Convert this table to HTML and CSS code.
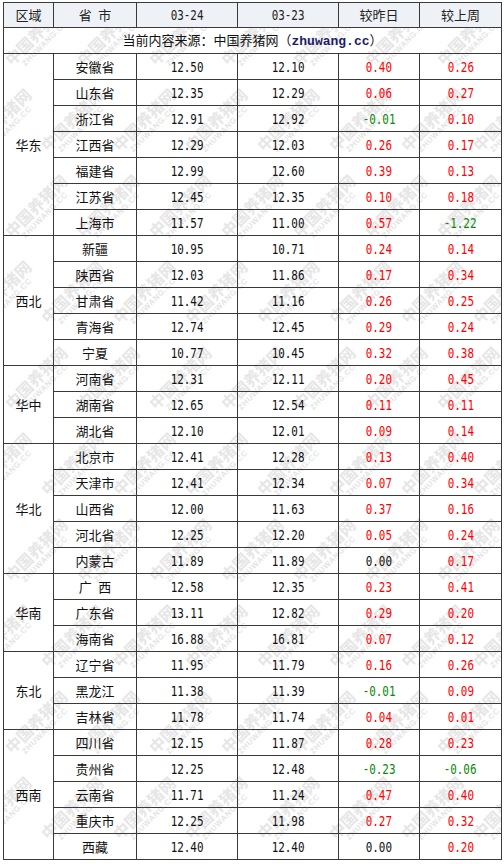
FILE: index.html
```html
<!DOCTYPE html>
<html lang="zh-CN">
<head>
<meta charset="utf-8">
<title>生猪价格</title>
<link rel="stylesheet" href="styles.css">
</head>
<body>
<div class="wrap">
<div class="wm" aria-hidden="true">
<div class="wm-row"><span class="wm-item">中国养猪网<small>ZHUWANG.CC</small></span><span class="wm-item">中国养猪网<small>ZHUWANG.CC</small></span><span class="wm-item">中国养猪网<small>ZHUWANG.CC</small></span><span class="wm-item">中国养猪网<small>ZHUWANG.CC</small></span><span class="wm-item">中国养猪网<small>ZHUWANG.CC</small></span><span class="wm-item">中国养猪网<small>ZHUWANG.CC</small></span><span class="wm-item">中国养猪网<small>ZHUWANG.CC</small></span><span class="wm-item">中国养猪网<small>ZHUWANG.CC</small></span></div>
<div class="wm-row"><span class="wm-item">中国养猪网<small>ZHUWANG.CC</small></span><span class="wm-item">中国养猪网<small>ZHUWANG.CC</small></span><span class="wm-item">中国养猪网<small>ZHUWANG.CC</small></span><span class="wm-item">中国养猪网<small>ZHUWANG.CC</small></span><span class="wm-item">中国养猪网<small>ZHUWANG.CC</small></span><span class="wm-item">中国养猪网<small>ZHUWANG.CC</small></span><span class="wm-item">中国养猪网<small>ZHUWANG.CC</small></span><span class="wm-item">中国养猪网<small>ZHUWANG.CC</small></span></div>
<div class="wm-row"><span class="wm-item">中国养猪网<small>ZHUWANG.CC</small></span><span class="wm-item">中国养猪网<small>ZHUWANG.CC</small></span><span class="wm-item">中国养猪网<small>ZHUWANG.CC</small></span><span class="wm-item">中国养猪网<small>ZHUWANG.CC</small></span><span class="wm-item">中国养猪网<small>ZHUWANG.CC</small></span><span class="wm-item">中国养猪网<small>ZHUWANG.CC</small></span><span class="wm-item">中国养猪网<small>ZHUWANG.CC</small></span><span class="wm-item">中国养猪网<small>ZHUWANG.CC</small></span></div>
<div class="wm-row"><span class="wm-item">中国养猪网<small>ZHUWANG.CC</small></span><span class="wm-item">中国养猪网<small>ZHUWANG.CC</small></span><span class="wm-item">中国养猪网<small>ZHUWANG.CC</small></span><span class="wm-item">中国养猪网<small>ZHUWANG.CC</small></span><span class="wm-item">中国养猪网<small>ZHUWANG.CC</small></span><span class="wm-item">中国养猪网<small>ZHUWANG.CC</small></span><span class="wm-item">中国养猪网<small>ZHUWANG.CC</small></span><span class="wm-item">中国养猪网<small>ZHUWANG.CC</small></span></div>
<div class="wm-row"><span class="wm-item">中国养猪网<small>ZHUWANG.CC</small></span><span class="wm-item">中国养猪网<small>ZHUWANG.CC</small></span><span class="wm-item">中国养猪网<small>ZHUWANG.CC</small></span><span class="wm-item">中国养猪网<small>ZHUWANG.CC</small></span><span class="wm-item">中国养猪网<small>ZHUWANG.CC</small></span><span class="wm-item">中国养猪网<small>ZHUWANG.CC</small></span><span class="wm-item">中国养猪网<small>ZHUWANG.CC</small></span><span class="wm-item">中国养猪网<small>ZHUWANG.CC</small></span></div>
<div class="wm-row"><span class="wm-item">中国养猪网<small>ZHUWANG.CC</small></span><span class="wm-item">中国养猪网<small>ZHUWANG.CC</small></span><span class="wm-item">中国养猪网<small>ZHUWANG.CC</small></span><span class="wm-item">中国养猪网<small>ZHUWANG.CC</small></span><span class="wm-item">中国养猪网<small>ZHUWANG.CC</small></span><span class="wm-item">中国养猪网<small>ZHUWANG.CC</small></span><span class="wm-item">中国养猪网<small>ZHUWANG.CC</small></span><span class="wm-item">中国养猪网<small>ZHUWANG.CC</small></span></div>
<div class="wm-row"><span class="wm-item">中国养猪网<small>ZHUWANG.CC</small></span><span class="wm-item">中国养猪网<small>ZHUWANG.CC</small></span><span class="wm-item">中国养猪网<small>ZHUWANG.CC</small></span><span class="wm-item">中国养猪网<small>ZHUWANG.CC</small></span><span class="wm-item">中国养猪网<small>ZHUWANG.CC</small></span><span class="wm-item">中国养猪网<small>ZHUWANG.CC</small></span><span class="wm-item">中国养猪网<small>ZHUWANG.CC</small></span><span class="wm-item">中国养猪网<small>ZHUWANG.CC</small></span></div>
<div class="wm-row"><span class="wm-item">中国养猪网<small>ZHUWANG.CC</small></span><span class="wm-item">中国养猪网<small>ZHUWANG.CC</small></span><span class="wm-item">中国养猪网<small>ZHUWANG.CC</small></span><span class="wm-item">中国养猪网<small>ZHUWANG.CC</small></span><span class="wm-item">中国养猪网<small>ZHUWANG.CC</small></span><span class="wm-item">中国养猪网<small>ZHUWANG.CC</small></span><span class="wm-item">中国养猪网<small>ZHUWANG.CC</small></span><span class="wm-item">中国养猪网<small>ZHUWANG.CC</small></span></div>
<div class="wm-row"><span class="wm-item">中国养猪网<small>ZHUWANG.CC</small></span><span class="wm-item">中国养猪网<small>ZHUWANG.CC</small></span><span class="wm-item">中国养猪网<small>ZHUWANG.CC</small></span><span class="wm-item">中国养猪网<small>ZHUWANG.CC</small></span><span class="wm-item">中国养猪网<small>ZHUWANG.CC</small></span><span class="wm-item">中国养猪网<small>ZHUWANG.CC</small></span><span class="wm-item">中国养猪网<small>ZHUWANG.CC</small></span><span class="wm-item">中国养猪网<small>ZHUWANG.CC</small></span></div>
<div class="wm-row"><span class="wm-item">中国养猪网<small>ZHUWANG.CC</small></span><span class="wm-item">中国养猪网<small>ZHUWANG.CC</small></span><span class="wm-item">中国养猪网<small>ZHUWANG.CC</small></span><span class="wm-item">中国养猪网<small>ZHUWANG.CC</small></span><span class="wm-item">中国养猪网<small>ZHUWANG.CC</small></span><span class="wm-item">中国养猪网<small>ZHUWANG.CC</small></span><span class="wm-item">中国养猪网<small>ZHUWANG.CC</small></span><span class="wm-item">中国养猪网<small>ZHUWANG.CC</small></span></div>
</div>
<table class="price">
<colgroup>
<col class="c-area"><col class="c-prov"><col class="c-day"><col class="c-day2"><col class="c-chg"><col class="c-chg2">
</colgroup>
<thead>
<tr class="head"><th>区域</th><th>省&ensp;市</th><th><span class="n">03-24</span></th><th><span class="n">03-23</span></th><th>较昨日</th><th>较上周</th></tr>
</thead>
<tbody>
<tr class="src"><td colspan="6">当前内容来源：中国养猪网（<b class="site">zhuwang.cc</b>）</td></tr>
<tr><td rowspan="7">华东</td><td>安徽省</td><td><span class="n">12.50</span></td><td><span class="n">12.10</span></td><td class="up"><span class="n">0.40</span></td><td class="up"><span class="n">0.26</span></td></tr>
<tr><td>山东省</td><td><span class="n">12.35</span></td><td><span class="n">12.29</span></td><td class="up"><span class="n">0.06</span></td><td class="up"><span class="n">0.27</span></td></tr>
<tr><td>浙江省</td><td><span class="n">12.91</span></td><td><span class="n">12.92</span></td><td class="down"><span class="n">-0.01</span></td><td class="up"><span class="n">0.10</span></td></tr>
<tr><td>江西省</td><td><span class="n">12.29</span></td><td><span class="n">12.03</span></td><td class="up"><span class="n">0.26</span></td><td class="up"><span class="n">0.17</span></td></tr>
<tr><td>福建省</td><td><span class="n">12.99</span></td><td><span class="n">12.60</span></td><td class="up"><span class="n">0.39</span></td><td class="up"><span class="n">0.13</span></td></tr>
<tr><td>江苏省</td><td><span class="n">12.45</span></td><td><span class="n">12.35</span></td><td class="up"><span class="n">0.10</span></td><td class="up"><span class="n">0.18</span></td></tr>
<tr><td>上海市</td><td><span class="n">11.57</span></td><td><span class="n">11.00</span></td><td class="up"><span class="n">0.57</span></td><td class="down"><span class="n">-1.22</span></td></tr>
<tr><td rowspan="5">西北</td><td>新疆</td><td><span class="n">10.95</span></td><td><span class="n">10.71</span></td><td class="up"><span class="n">0.24</span></td><td class="up"><span class="n">0.14</span></td></tr>
<tr><td>陕西省</td><td><span class="n">12.03</span></td><td><span class="n">11.86</span></td><td class="up"><span class="n">0.17</span></td><td class="up"><span class="n">0.34</span></td></tr>
<tr><td>甘肃省</td><td><span class="n">11.42</span></td><td><span class="n">11.16</span></td><td class="up"><span class="n">0.26</span></td><td class="up"><span class="n">0.25</span></td></tr>
<tr><td>青海省</td><td><span class="n">12.74</span></td><td><span class="n">12.45</span></td><td class="up"><span class="n">0.29</span></td><td class="up"><span class="n">0.24</span></td></tr>
<tr><td>宁夏</td><td><span class="n">10.77</span></td><td><span class="n">10.45</span></td><td class="up"><span class="n">0.32</span></td><td class="up"><span class="n">0.38</span></td></tr>
<tr><td rowspan="3">华中</td><td>河南省</td><td><span class="n">12.31</span></td><td><span class="n">12.11</span></td><td class="up"><span class="n">0.20</span></td><td class="up"><span class="n">0.45</span></td></tr>
<tr><td>湖南省</td><td><span class="n">12.65</span></td><td><span class="n">12.54</span></td><td class="up"><span class="n">0.11</span></td><td class="up"><span class="n">0.11</span></td></tr>
<tr><td>湖北省</td><td><span class="n">12.10</span></td><td><span class="n">12.01</span></td><td class="up"><span class="n">0.09</span></td><td class="up"><span class="n">0.14</span></td></tr>
<tr><td rowspan="5">华北</td><td>北京市</td><td><span class="n">12.41</span></td><td><span class="n">12.28</span></td><td class="up"><span class="n">0.13</span></td><td class="up"><span class="n">0.40</span></td></tr>
<tr><td>天津市</td><td><span class="n">12.41</span></td><td><span class="n">12.34</span></td><td class="up"><span class="n">0.07</span></td><td class="up"><span class="n">0.34</span></td></tr>
<tr><td>山西省</td><td><span class="n">12.00</span></td><td><span class="n">11.63</span></td><td class="up"><span class="n">0.37</span></td><td class="up"><span class="n">0.16</span></td></tr>
<tr><td>河北省</td><td><span class="n">12.25</span></td><td><span class="n">12.20</span></td><td class="up"><span class="n">0.05</span></td><td class="up"><span class="n">0.24</span></td></tr>
<tr><td>内蒙古</td><td><span class="n">11.89</span></td><td><span class="n">11.89</span></td><td><span class="n">0.00</span></td><td class="up"><span class="n">0.17</span></td></tr>
<tr><td rowspan="3">华南</td><td>广&ensp;西</td><td><span class="n">12.58</span></td><td><span class="n">12.35</span></td><td class="up"><span class="n">0.23</span></td><td class="up"><span class="n">0.41</span></td></tr>
<tr><td>广东省</td><td><span class="n">13.11</span></td><td><span class="n">12.82</span></td><td class="up"><span class="n">0.29</span></td><td class="up"><span class="n">0.20</span></td></tr>
<tr><td>海南省</td><td><span class="n">16.88</span></td><td><span class="n">16.81</span></td><td class="up"><span class="n">0.07</span></td><td class="up"><span class="n">0.12</span></td></tr>
<tr><td rowspan="3">东北</td><td>辽宁省</td><td><span class="n">11.95</span></td><td><span class="n">11.79</span></td><td class="up"><span class="n">0.16</span></td><td class="up"><span class="n">0.26</span></td></tr>
<tr><td>黑龙江</td><td><span class="n">11.38</span></td><td><span class="n">11.39</span></td><td class="down"><span class="n">-0.01</span></td><td class="up"><span class="n">0.09</span></td></tr>
<tr><td>吉林省</td><td><span class="n">11.78</span></td><td><span class="n">11.74</span></td><td class="up"><span class="n">0.04</span></td><td class="up"><span class="n">0.01</span></td></tr>
<tr><td rowspan="5">西南</td><td>四川省</td><td><span class="n">12.15</span></td><td><span class="n">11.87</span></td><td class="up"><span class="n">0.28</span></td><td class="up"><span class="n">0.23</span></td></tr>
<tr><td>贵州省</td><td><span class="n">12.25</span></td><td><span class="n">12.48</span></td><td class="down"><span class="n">-0.23</span></td><td class="down"><span class="n">-0.06</span></td></tr>
<tr><td>云南省</td><td><span class="n">11.71</span></td><td><span class="n">11.24</span></td><td class="up"><span class="n">0.47</span></td><td class="up"><span class="n">0.40</span></td></tr>
<tr><td>重庆市</td><td><span class="n">12.25</span></td><td><span class="n">11.98</span></td><td class="up"><span class="n">0.27</span></td><td class="up"><span class="n">0.32</span></td></tr>
<tr><td>西藏</td><td><span class="n">12.40</span></td><td><span class="n">12.40</span></td><td><span class="n">0.00</span></td><td class="up"><span class="n">0.20</span></td></tr>
</tbody>
</table>
</div>
</body>
</html>
```

FILE: styles.css
```css
html, body {
  margin: 0;
  padding: 0;
  background: #ffffff;
}

.wrap {
  position: relative;
  width: 499px;
  margin: 2px 0 0 3px;
}

.price {
  position: relative;
  z-index: 1;
  border-collapse: collapse;
  table-layout: fixed;
  width: 499px;
  font-family: "Noto Sans CJK SC", "Noto Sans", sans-serif;
  font-size: 13px;
  color: #111111;
}

.c-area { width: 50px; }
.c-prov { width: 83px; }
.c-day { width: 101px; }
.c-day2 { width: 101px; }
.c-chg { width: 81px; }
.c-chg2 { width: 82px; }

.price th,
.price td {
  border: 1px solid #3a3a3a;
  padding: 0;
  height: 25px;
  text-align: center;
  vertical-align: middle;
  font-weight: normal;
  line-height: 16px;
  white-space: nowrap;
}

.head th {
  height: 24px;
  background: #eef2f7;
  color: #222222;
}

.n {
  display: inline-block;
  font-family: "DejaVu Sans Mono", "Liberation Mono", monospace;
  font-size: 14px;
  transform: scaleX(0.78);
}

.up { color: #ff0000; }
.down { color: #0a8a0a; }

.site {
  font-family: "Liberation Mono", monospace;
  font-weight: bold;
  color: #1b1b66;
}

.wm {
  position: absolute;
  left: 0;
  top: 0;
  width: 499px;
  height: 858px;
  overflow: hidden;
  pointer-events: none;
  z-index: 0;
}

.wm-row {
  display: flex;
  width: 640px;
  height: 86px;
}

.wm-row:first-child {
  margin-top: -8px;
}

.wm-row:nth-child(even) {
  margin-left: -36px;
}

.wm-item {
  flex: 0 0 72px;
  width: 72px;
  min-width: 0;
  height: 86px;
  display: flex;
  flex-direction: column;
  align-items: center;
  justify-content: center;
  transform: rotate(-45deg);
  font-family: "Noto Sans CJK SC", sans-serif;
  font-size: 16px;
  font-weight: bold;
  line-height: 18px;
  color: #e6e6e6;
  white-space: nowrap;
}

.wm-item small {
  font-family: "Liberation Sans", sans-serif;
  font-size: 8px;
  line-height: 10px;
  font-weight: bold;
  letter-spacing: 0.6px;
  color: #e4e4e4;
}
```
